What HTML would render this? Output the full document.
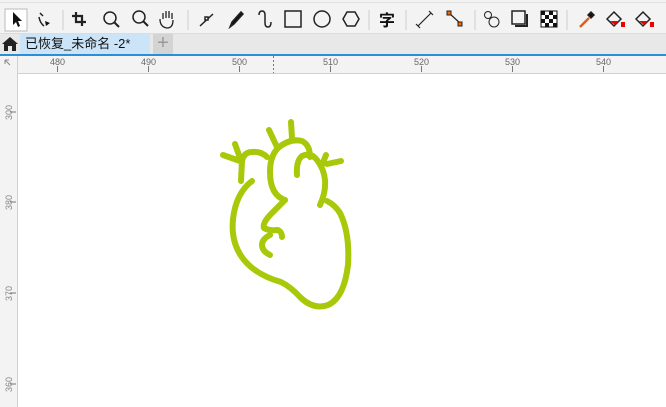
<!DOCTYPE html><html><head><style>
body{margin:0;width:666px;height:407px;overflow:hidden;background:#fff;font-family:"Liberation Sans","Noto Sans CJK SC",sans-serif;position:relative}
.a{position:absolute}
</style></head><body>
<div class="a" style="left:0;top:0;width:666px;height:33px;background:#f3f3f3;border-bottom:1px solid #dcdcdc"></div>
<div class="a" style="left:0;top:2px;width:666px;height:1px;background:#e0e0e0"></div>
<svg class="a" style="left:0;top:0" width="666" height="34" fill="none" stroke="#222" stroke-width="1.5">
<rect x="5" y="9" width="22" height="22" fill="#fff" stroke="#bbb" stroke-width="1"/>
<path d="M13 12v13l3-3 2 5 2-1-2-5h4z" fill="#111" stroke="none"/>
<path d="M40 13l3 3M39 17q1 6 5 9" /><path d="M45 21l5 2-4 3z" fill="#111" stroke="none"/>
<line x1="63" y1="10" x2="63" y2="30" stroke="#ccc" stroke-width="1"/>
<path d="M76 12v10h10M72 16h10v10" stroke-width="2.2"/>
<circle cx="110" cy="18" r="6"/><path d="M114 22l5 5" stroke-width="2"/>
<circle cx="139" cy="17" r="6"/><path d="M143 21l5 5" stroke-width="2"/>
<path d="M163 19v-6m3 5v-7m3 7v-7m3 8v-6m-12 6q0 8 7 9q6 0 6-8" stroke-width="1.3"/>
<line x1="188" y1="10" x2="188" y2="30" stroke="#ccc" stroke-width="1"/>
<path d="M200 26l13-12"/><rect x="205" y="17" width="3" height="3" fill="#fff"/>
<path d="M230 27l2-5 9-10 2 2-9 10z" fill="#111"/>
<path d="M259 15q0-4 3-4t3 4v8q0 4 3 4t3-5"/>
<rect x="285" y="11" width="16" height="16"/>
<circle cx="322" cy="19" r="8"/>
<path d="M347 12h8l4 7-4 7h-8l-4-7z"/>
<line x1="369" y1="10" x2="369" y2="30" stroke="#ccc" stroke-width="1"/>
<text x="379" y="26" font-size="16" fill="#111" stroke="none" font-family="Noto Sans CJK SC" font-weight="bold">字</text>
<line x1="406" y1="10" x2="406" y2="30" stroke="#ccc" stroke-width="1"/>
<path d="M418 26l13-13M416 24l4 4M429 11l4 4" stroke-width="1.2"/>
<path d="M449 13l12 11" stroke-width="1.2"/><rect x="447" y="11" width="4" height="4" fill="#f60" stroke="#222" stroke-width="1"/><rect x="458" y="22" width="4" height="4" fill="#f60" stroke="#222" stroke-width="1"/>
<line x1="475" y1="10" x2="475" y2="30" stroke="#ccc" stroke-width="1"/>
<circle cx="488" cy="15" r="3.5" stroke-width="1"/><circle cx="494" cy="22" r="5" stroke-width="1"/>
<rect x="512" y="11" width="13" height="13" stroke-width="1.5"/><path d="M527 14v12h-12" stroke-width="2"/>
<rect x="541" y="11" width="16" height="16" fill="#fff" stroke="#111" stroke-width="1"/>
<path d="M541 11h4v4h-4zM549 11h4v4h-4zM545 15h4v4h-4zM553 15h4v4h-4zM541 19h4v4h-4zM549 19h4v4h-4zM545 23h4v4h-4zM553 23h4v4h-4z" fill="#111" stroke="none"/>
<line x1="567" y1="10" x2="567" y2="30" stroke="#ccc" stroke-width="1"/>
<path d="M580 27l9-9" stroke="#e06010" stroke-width="2.5"/><path d="M588 15l3-3 3 3-3 3z" fill="#111"/>
<path d="M607 19l7-7 7 7-7 7z" stroke-width="1.5"/><path d="M610 21h9l-4 4z" fill="#e00" stroke="none"/><rect x="621" y="22" width="4" height="5" fill="#e00" stroke="none"/>
<path d="M636 19l7-7 7 7-7 7z" stroke-width="1.5"/><path d="M639 21h9l-4 4z" fill="#e00" stroke="none"/><rect x="650" y="22" width="4" height="5" fill="#e00" stroke="none"/>
</svg>
<div class="a" style="left:0;top:34px;width:666px;height:20px;background:#e8e8e8;border-bottom:2px solid #2a8fd6"></div>
<svg class="a" style="left:1px;top:36px" width="18" height="16"><path d="M1 8l8-7 8 7h-2v7h-4v-5h-4v5h-4v-7z" fill="#222"/></svg>
<div class="a" style="left:20px;top:34px;width:130px;height:20px;background:#cce4f7;font-size:13px;line-height:20px;padding-left:5px;box-sizing:border-box;color:#111">已恢复_未命名 -2*</div>
<div class="a" style="left:153px;top:34px;width:20px;height:20px;background:#d4d4d4;color:#999;font-size:20px;line-height:19px;text-align:center">+</div>
<div class="a" style="left:0;top:56px;width:666px;height:17px;background:#f3f3f3;border-bottom:1px solid #d0d0d0"></div>
<div class="a" style="left:0;top:56px;width:17px;height:351px;background:#f3f3f3;border-right:1px solid #d0d0d0"></div>
<svg class="a" style="left:0;top:56px" width="666" height="351" font-family="Liberation Sans" font-size="9" fill="#888">
<path d="M5 4l5 5M5 4v4M5 4h4" stroke="#888" fill="none"/>
<g fill="#666">
<text x="50" y="9">480</text><text x="141" y="9">490</text><text x="232" y="9">500</text><text x="323" y="9">510</text><text x="414" y="9">520</text><text x="505" y="9">530</text><text x="596" y="9">540</text>
</g>
<g stroke="#777" stroke-width="1">
<path d="M57.5 10v6M148.5 10v6M239.5 10v6M330.5 10v6M421.5 10v6M512.5 10v6M603.5 10v6"/>
<path d="M273.5 0v17" stroke-dasharray="2 2"/>
<path d="M10 56h6M10 146h6M10 237h6M10 328h6"/>
</g>
<g fill="#888">
<text transform="translate(12,64) rotate(-90)">300</text>
<text transform="translate(12,154) rotate(-90)">380</text>
<text transform="translate(12,245) rotate(-90)">370</text>
<text transform="translate(12,336) rotate(-90)">360</text>
</g>
</svg>
<svg class="a" style="left:0;top:0" width="666" height="407" fill="none" stroke="#a8c90a" stroke-width="6" stroke-linecap="round" stroke-linejoin="round">
<path d="M223 155l17 6M235 144l5 14M242 161q2-9 10-9q9-1 15 5M242 161l-1 20"/>
<path d="M252 181q-16 12-19 38q-3 30 18 48q12 10 30 15q10 5 20 16q13 12 27 7q16-7 20-40q2-32-8-52q-5-8-13-12"/>
<path d="M285 200q-15-5-15-28q0-16 8-24q12-10 24-7q8 4 8 16"/>
<path d="M285 200l-13 13q-10 10-8 15q5 3 14 2q4 2 4 7M270 235q-8 4-8 10q0 6 8 10"/>
<path d="M297 175q-1-14 5-19q9-4 15 4q7 9 8 20q1 12-5 25M277 147l-8-17M292 138l-1-16M322 165l4-10M327 164l14-3"/>
</svg>
</body></html>
